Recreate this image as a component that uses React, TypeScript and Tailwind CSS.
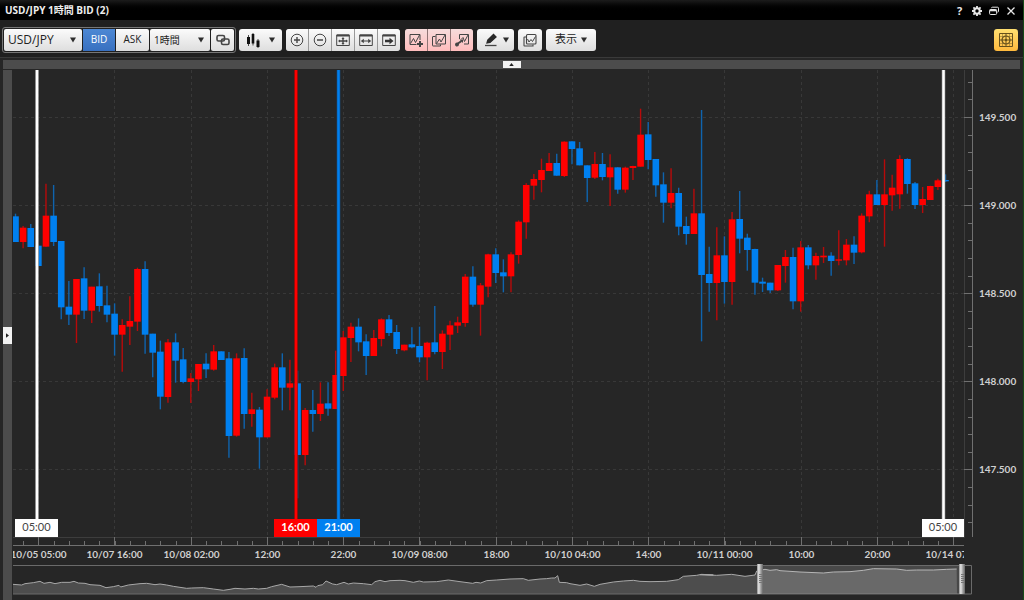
import React from "react";

type Bar = [kind: "R" | "B", high: number, top: number, bottom: number, low: number];

// Bar extents are in thirds of a chart unit below each segment's base.
const SEGMENTS: { base: number; bars: Bar[] }[] = [
  {
    base: 170,
    bars: [
      ["B", 131, 139, 216, 216], ["R", 168, 173, 216, 235], ["B", 162, 174, 231, 231], ["B", 227, 227, 288, 288],
      ["R", 41, 137, 230, 230], ["B", 45, 137, 216, 228], ["B", 213, 213, 412, 448], ["B", 333, 410, 434, 465],
      ["R", 327, 327, 434, 519], ["B", 292, 325, 422, 447], ["R", 350, 350, 422, 459], ["B", 310, 349, 408, 425],
      ["B", 347, 406, 434, 457], ["B", 400, 431, 494, 557], ["R", 448, 465, 494, 605], ["R", 379, 453, 470, 525],
      ["R", 293, 297, 455, 483], ["B", 274, 297, 494, 551], ["B", 491, 491, 548, 622], ["B", 512, 545, 680, 718],
      ["R", 507, 517, 681, 698], ["B", 490, 517, 572, 638], ["B", 534, 568, 636, 640], ["R", 609, 625, 636, 699],
      ["R", 582, 582, 628, 663], ["B", 550, 581, 598, 624],
    ],
  },
  {
    base: 310,
    bars: [
      ["R", 105, 124, 179, 182], ["B", 124, 124, 150, 150], ["B", 126, 145, 378, 443], ["R", 130, 145, 377, 380],
      ["B", 115, 144, 312, 356], ["R", 248, 298, 312, 350], ["B", 291, 299, 382, 476], ["R", 238, 260, 382, 382],
      ["R", 161, 172, 263, 268], ["B", 130, 172, 233, 301], ["R", 149, 220, 233, 301], ["B", 182, 220, 435, 565],
      ["R", 294, 300, 435, 466], ["B", 240, 300, 312, 365], ["R", 217, 281, 312, 333], ["B", 217, 280, 296, 317],
      ["R", 122, 195, 297, 297], ["R", 63, 82, 198, 243], ["R", 38, 50, 84, 156], ["B", 25, 50, 97, 124],
      ["B", 73, 94, 138, 195], ["R", 60, 84, 138, 138], ["R", 25, 28, 87, 109],
    ],
  },
  {
    base: 200,
    bars: [
      ["B", 345, 358, 399, 408], ["B", 375, 396, 447, 462], ["R", 434, 434, 451, 454], ["B", 382, 433, 442, 445],
      ["B", 380, 438, 472, 487], ["R", 425, 428, 472, 541], ["B", 318, 427, 456, 463], ["R", 391, 401, 456, 507],
      ["R", 362, 376, 404, 450], ["R", 350, 367, 377, 399], ["R", 222, 230, 369, 380], ["B", 199, 230, 314, 320],
      ["R", 249, 256, 314, 407], ["R", 161, 163, 260, 292], ["B", 145, 163, 219, 249],
    ],
  },
  {
    base: 100,
    bars: [
      ["B", 478, 517, 529, 577], ["R", 457, 463, 529, 577], ["R", 361, 365, 465, 491], ["R", 250, 255, 367, 416],
      ["R", 222, 237, 257, 299], ["R", 176, 210, 240, 277], ["R", 159, 189, 213, 213], ["B", 161, 189, 227, 227],
      ["R", 124, 125, 228, 231], ["B", 124, 124, 147, 193], ["B", 126, 145, 196, 196], ["B", 196, 196, 234, 306],
      ["R", 156, 192, 233, 237], ["B", 159, 192, 231, 241], ["R", 163, 202, 232, 318], ["B", 202, 202, 269, 281],
      ["R", 200, 203, 269, 278], ["R", 197, 198, 204, 240], ["R", 26, 104, 200, 200], ["B", 66, 103, 180, 208],
      ["B", 177, 177, 256, 290], ["B", 217, 253, 308, 368], ["R", 205, 279, 308, 325], ["B", 263, 279, 380, 406],
      ["B", 350, 378, 402, 434], ["R", 266, 340, 402, 402], ["B", 30, 340, 525, 724], ["B", 440, 522, 549, 635],
      ["R", 382, 466, 549, 661], ["B", 409, 466, 546, 611], ["R", 336, 358, 546, 614], ["B", 273, 357, 416, 460],
      ["B", 401, 413, 450, 512], ["B", 446, 447, 548, 584], ["B", 533, 545, 551, 576], ["B", 548, 548, 571, 579],
      ["R", 495, 495, 571, 573], ["R", 450, 471, 498, 548], ["B", 443, 471, 604, 628], ["R", 423, 442, 604, 635],
      ["B", 435, 442, 496, 508], ["R", 458, 468, 496, 539], ["R", 441, 467, 472, 489], ["B", 457, 467, 483, 527],
      ["R", 391, 478, 482, 496], ["R", 417, 434, 481, 496], ["B", 409, 434, 458, 492], ["R", 340, 347, 457, 460],
      ["R", 272, 283, 349, 367],
    ],
  },
  {
    base: 70,
    bars: [
      ["B", 330, 373, 405, 405], ["R", 268, 373, 405, 530], ["R", 314, 353, 376, 422], ["R", 256, 267, 373, 416],
      ["B", 265, 267, 342, 371], ["B", 336, 340, 405, 417], ["R", 351, 387, 405, 429], ["R", 347, 348, 390, 390],
      ["R", 326, 331, 351, 360], ["B", 313, 330, 334, 336],
    ],
  },
];

const CANDLES = SEGMENTS.flatMap(({ base, bars }) =>
  bars.map(([kind, high, top, bottom, low]) => ({
    kind,
    high: base + high / 3,
    top: base + top / 3,
    bottom: base + bottom / 3,
    low: base + low / 3,
  })),
);

const NAV_SEGMENTS: { x: number; y: number; points: [number, number][] }[] = [
  {
    x: 0,
    y: 500,
    points: [
      [39, 253], [65, 255], [75, 251], [100, 248], [120, 244], [132, 250], [150, 247], [165, 251], [185, 247],
      [210, 247], [222, 244], [235, 249], [255, 250], [270, 254], [300, 256], [318, 263], [340, 260], [357, 256],
      [362, 261], [385, 255], [420, 251], [440, 250], [465, 254], [480, 252], [500, 255], [520, 259], [560, 265],
      [575, 264], [610, 263], [640, 267], [670, 271], [690, 268], [705, 265], [735, 267], [760, 265], [775, 267],
      [800, 265], [815, 260], [845, 253], [870, 261], [900, 260], [940, 258], [948, 262], [953, 257], [968, 254],
      [978, 243], [998, 252], [1010, 254], [1032, 247], [1045, 252], [1060, 249], [1090, 251], [1115, 254],
      [1125, 245], [1140, 241], [1155, 245], [1170, 242],
    ],
  },
  {
    x: 400,
    y: 510,
    points: [
      [0, 211], [15, 212], [40, 217], [58, 213], [70, 216], [110, 215], [145, 210], [180, 215], [218, 220],
      [228, 217], [242, 219], [260, 212], [290, 210], [330, 207], [370, 206], [385, 211], [420, 207], [440, 206],
      [455, 204], [465, 204], [473, 197], [478, 217], [500, 218], [510, 221], [540, 226], [560, 222], [583, 229],
      [600, 223], [640, 216], [670, 213], [700, 211], [720, 214], [750, 215], [800, 214], [835, 209], [850, 199],
      [890, 196], [905, 193], [940, 195],
    ],
  },
  {
    x: 700,
    y: 440,
    points: [
      [0, 404], [50, 406], [95, 403], [135, 409], [165, 405], [170, 393], [195, 388], [210, 391], [230, 389],
      [240, 392], [300, 396], [370, 399], [400, 396], [450, 395], [490, 391], [520, 386], [590, 387], [620, 391],
      [650, 390], [700, 390], [740, 388], [770, 387],
    ],
  },
];

const NAV_LINE = NAV_SEGMENTS.flatMap((s) => s.points.map(([x, y]) => `${s.x + x / 3},${s.y + y / 3}`)).join(" ");

const TIMES = [
  "10/05 05:00", "10/07 16:00", "10/08 02:00", "12:00", "22:00", "10/09 08:00", "18:00",
  "10/10 04:00", "14:00", "10/11 00:00", "10:00", "20:00", "10/14 07:00",
];
const PRICES = ["149.500", "149.000", "148.500", "148.000", "147.500"];

const timeX = (i: number) => Math.round(38.2 + i * 76.24) + 0.5;
const priceY = (i: number) => Math.round(117 + i * 88.1) + 0.5;
const minorTimes = Array.from({ length: 62 }, (_, i) => Math.round(23.1 + i * 15.25) + 0.5);
const minorPrices = Array.from({ length: 27 }, (_, i) => Math.round(81.8 + i * 17.62) + 0.5).filter((y) => y < 537);

const MARKERS = [
  { x: 37, left: 15, width: 43, label: "05:00", fill: "#ffffff", text: "#444444", edge: "#8a8a8a", weight: 400 },
  { x: 296, left: 274, width: 43, label: "16:00", fill: "#ff0000", text: "#ffffff", edge: "#8c0c0c", weight: 700 },
  { x: 338.5, left: 317, width: 43, label: "21:00", fill: "#0080f0", text: "#ffffff", edge: "#15508a", weight: 700 },
  { x: 943.5, left: 922, width: 42, label: "05:00", fill: "#ffffff", text: "#444444", edge: "#8a8a8a", weight: 400 },
];

function Chart() {
  return (
    <svg
      viewBox="13 70 1010 530"
      className="block h-auto w-full"
      fontFamily="Lato, sans-serif"
      fontSize="10"
      role="img"
      aria-label="USD/JPY"
    >
      <defs>
        <clipPath id="timeline">
          <rect x="13" y="70" width="951" height="530" />
        </clipPath>
        <linearGradient id="grip" x1="0" x2="1" y1="0" y2="0">
          <stop offset="0" stopColor="#8e8e8e" />
          <stop offset="0.3" stopColor="#e6e6e6" />
          <stop offset="0.6" stopColor="#a8a8a8" />
          <stop offset="1" stopColor="#666666" />
        </linearGradient>
      </defs>

      <g stroke="#383838" strokeDasharray="3 3">
        {PRICES.map((p, i) => (
          <line key={p} x1="13" x2="964" y1={priceY(i)} y2={priceY(i)} />
        ))}
        {TIMES.map((t, i) => (
          <line key={t} x1={timeX(i)} x2={timeX(i)} y1="70" y2="537" />
        ))}
      </g>
      <path d="M13 537.5H964.5V70" fill="none" stroke="#3d3d3d" />

      <g>
        {CANDLES.map((c, i) => {
          const x = 15.5 + i * 7.623;
          const red = c.kind === "R";
          return (
            <g key={i}>
              <line x1={x} x2={x} y1={c.high} y2={c.low} stroke={red ? "#b80a0a" : "#0f64ae"} strokeWidth="1.4" />
              <rect
                x={x - 3.3}
                y={c.top}
                width="6.6"
                height={Math.max(c.bottom - c.top, 1)}
                fill={red ? "#ff0000" : "#0080f0"}
              />
            </g>
          );
        })}
      </g>

      {MARKERS.map((m) => (
        <g key={m.x}>
          <line x1={m.x} x2={m.x} y1="70" y2="520" stroke={m.edge} strokeWidth="3.6" />
          <line x1={m.x} x2={m.x} y1="70" y2="520" stroke={m.fill} strokeWidth="2.4" />
          <rect x={m.left} y="519" width={m.width} height="18" fill={m.fill} />
          <text x={m.left + m.width / 2} y="531" textAnchor="middle" fill={m.text} fontWeight={m.weight} fontSize="11">
            {m.label}
          </text>
        </g>
      ))}

      <g stroke="#707070">
        <path d="M13 545.5H964M972.5 70V537" fill="none" />
        {TIMES.map((t, i) => (
          <line key={t} x1={timeX(i)} x2={timeX(i)} y1="537" y2="545" />
        ))}
        {minorTimes.map((x) => (
          <line key={x} x1={x} x2={x} y1="541" y2="545" />
        ))}
        {PRICES.map((p, i) => (
          <line key={p} x1="964" x2="972" y1={priceY(i)} y2={priceY(i)} />
        ))}
        {minorPrices.map((y) => (
          <line key={y} x1="968" x2="972" y1={y} y2={y} />
        ))}
      </g>

      <g fill="#d0d0d0" fontWeight="700" clipPath="url(#timeline)">
        {TIMES.map((t, i) => (
          <text key={t} x={timeX(i)} y="558" textAnchor="middle">
            {t}
          </text>
        ))}
      </g>
      <g fill="#d0d0d0" fontWeight="700">
        {PRICES.map((p, i) => (
          <text key={p} x="979" y={priceY(i) + 3}>
            {p}
          </text>
        ))}
      </g>

      <polygon points={`13,594 ${NAV_LINE} 957,594`} fill="#4d4d4d" />
      <polyline points={NAV_LINE} fill="none" stroke="#a8a8a8" />
      <path d="M13 565.5H971.5V594H13" fill="none" stroke="#6a6a6a" />
      <rect x="761" y="566" width="200" height="28" fill="#ffffff" fillOpacity="0.16" />
      {[757, 959].map((x) => (
        <g key={x}>
          <rect x={x} y="564" width="6" height="30" fill="url(#grip)" />
          <path d={`M${x + 2} 574.5h3m-3 2h3m-3 2h3m-3 2h3m-3 2h3`} stroke="#777777" />
        </g>
      ))}
    </svg>
  );
}

function Glyph({ children }: { children: React.ReactNode }) {
  return (
    <svg viewBox="0 0 16 14" className="h-3.5 w-4" fill="none" stroke="#454545" strokeWidth="1.3" aria-hidden="true">
      {children}
    </svg>
  );
}

function Caret() {
  return (
    <svg viewBox="0 0 6 6" className="h-1.5 w-1.5" aria-hidden="true">
      <path d="M0 0.5h6L3 5.5z" fill="#2c2c2c" />
    </svg>
  );
}

const FACE = "flex h-[22px] items-center justify-center bg-linear-to-b from-[#fbfbfb] to-[#dedede]";
const PINK = "flex h-[22px] w-[22px] items-center justify-center bg-linear-to-b from-[#f6dcdc] to-[#ffbcbc]";

function Picker({ label, value, className }: { label: string; value: string; className: string }) {
  return (
    <div className={`relative ${className}`}>
      <select
        aria-label={label}
        className="h-[22px] w-full appearance-none rounded-[2px] bg-linear-to-b from-[#fbfbfb] to-[#dedede] pr-4 pl-1 leading-[22px] text-[#222]"
      >
        <option>{value}</option>
      </select>
      <span className="pointer-events-none absolute inset-y-0 right-1.5 flex items-center">
        <Caret />
      </span>
    </div>
  );
}

function TitleBar() {
  const cls = "flex h-4 w-[17px] items-center justify-center text-[#e8e8e8]";
  return (
    <header className="flex h-5 items-center justify-between bg-linear-to-b from-[#1c1c1c] to-black to-60% pr-1 pl-[5px]">
      <h1 className="text-[10px] leading-4 font-bold text-[#eeeeee]">USD/JPY 1時間 BID (2)</h1>
      <div className="flex pt-0.5">
        <button className={`${cls} text-[11px] font-bold`}>?</button>
        <button className={cls} aria-label="設定">
          <svg viewBox="0 0 10 10" className="h-2.5 w-2.5" fill="none" stroke="currentColor">
            <circle cx="5" cy="5" r="2.7" strokeWidth="2" />
            <path d="M5 0v2M5 8v2M0 5h2M8 5h2M1.4 1.4l1.3 1.3M7.3 7.3l1.3 1.3M8.6 1.4L7.3 2.7M2.7 7.3L1.4 8.6" strokeWidth="1.8" />
          </svg>
        </button>
        <button className={cls} aria-label="ウィンドウ">
          <svg viewBox="0 0 10 10" className="h-2.5 w-2.5" fill="none" stroke="currentColor">
            <path d="M2.5 2.2q0-1 1-1h5q1 0 1 1v3q0 1-1 1" />
            <rect x="0.6" y="3.5" width="7" height="5" rx="1" />
            <path d="M0.8 4.4h6.6" strokeWidth="1.8" />
          </svg>
        </button>
        <button className={cls} aria-label="閉じる">
          <svg viewBox="0 0 10 10" className="h-2.5 w-2.5" stroke="currentColor" strokeWidth="1.3">
            <path d="M1.5 1.5l7 7M8.5 1.5l-7 7" />
          </svg>
        </button>
      </div>
    </header>
  );
}

function Toolbar() {
  return (
    <div className="flex h-[38px] items-center border-b border-[#3a3a3a] bg-[#202020] pt-0.5 pr-[5px] pl-0.5 text-[11px] text-[#222]">
      <div className="flex gap-px rounded-[3px] border border-[#777] p-px">
        <Picker label="通貨ペア" value="USD/JPY" className="w-[78px] text-[12px]" />
        <div className="flex gap-px">
          <button className="h-[22px] w-8 bg-linear-to-b from-[#4d88d4] to-[#3870c0] text-[10px] text-white">BID</button>
          <button className={`${FACE} w-[33px] rounded-r-[2px] text-[10px]`}>ASK</button>
        </div>
        <Picker label="足種" value="1時間" className="w-[60px] text-[10px]" />
        <button className={`${FACE} w-[23px] rounded-[2px]`} aria-label="連動">
          <Glyph>
            <rect x="2" y="2.5" width="7.5" height="5.5" rx="1.5" strokeWidth="1.6" />
            <rect x="6.5" y="6" width="7.5" height="5.5" rx="1.5" strokeWidth="1.6" />
          </Glyph>
        </button>
      </div>

      <button className={`${FACE} ml-[3px] w-[43px] gap-2 rounded-[3px] pr-0.5`} aria-label="チャート種類">
        <svg viewBox="0 0 16 16" className="h-4 w-4" aria-hidden="true">
          <path d="M3.5 3v11M8 1v12.500M13 7v9" stroke="#222" strokeWidth="0.800" />
          <path d="M2 5h3v7H2zM6.700 2h2.600v9.500H6.700zM11.500 8.500h3v6.500h-3z" fill="#111" />
        </svg>
        <Caret />
      </button>

      <div className="ml-1 flex gap-px overflow-hidden rounded-[3px] bg-[#999]">
        <button className={`${FACE} w-[22px]`} aria-label="拡大">
          <Glyph>
            <circle cx="8" cy="7" r="5.8" strokeWidth="1" />
            <path d="M5 7h6M8 4v6" strokeWidth="1.4" />
          </Glyph>
        </button>
        <button className={`${FACE} w-[22px]`} aria-label="縮小">
          <Glyph>
            <circle cx="8" cy="7" r="5.8" strokeWidth="1" />
            <path d="M5 7h6" strokeWidth="1.4" />
          </Glyph>
        </button>
        <button className={`${FACE} w-[22px]`} aria-label="全体表示">
          <Glyph>
            <path d="M1.700 2h12.600v10.500H1.700z" strokeWidth="1" />
            <path d="M1.700 2.500h12.600" strokeWidth="2.200" />
            <path d="M4 8h8M8 5v6" strokeWidth="1.400" />
            <path d="M3 8l2-1.500v3zM13 8l-2-1.500v3zM8 4l1.500 2h-3zM8 12l1.500-2h-3z" fill="#454545" stroke="none" />
          </Glyph>
        </button>
        <button className={`${FACE} w-[22px]`} aria-label="横幅に合わせる">
          <Glyph>
            <path d="M1.700 2h12.600v10.500H1.700z" strokeWidth="1" />
            <path d="M1.700 2.500h12.600" strokeWidth="2.200" />
            <path d="M4 8h8" strokeWidth="1.200" />
            <path d="M2.800 8l3-2.300v4.600zM13.200 8l-3-2.300v4.600z" fill="#454545" stroke="none" />
          </Glyph>
        </button>
        <button className={`${FACE} w-[22px]`} aria-label="最新へ移動">
          <Glyph>
            <path d="M1.700 2h12.600v10.500H1.700z" strokeWidth="1" />
            <path d="M1.700 2.500h12.600" strokeWidth="2.200" />
            <path d="M4 6.700h4.500V4.700l4 3.300-4 3.300V9.300H4z" fill="#333" stroke="none" />
          </Glyph>
        </button>
      </div>

      <div className="ml-[5px] flex gap-px overflow-hidden rounded-[3px] bg-[#8f7474]">
        <button className={PINK} aria-label="テクニカル追加">
          <Glyph>
            <path d="M8.500 11.500H2v-10h10V7" strokeWidth="1" />
            <path d="M2.500 10.500l3-5 2 4L11.500 2" strokeWidth="1" />
            <path d="M9 11h6M12 8v6" strokeWidth="2" />
          </Glyph>
        </button>
        <button className={PINK} aria-label="テクニカル複製">
          <Glyph>
            <path d="M4.500 3.500H2q-.5 0-.5.500v8.500q0 .5.5.5h7.500v-1.500" strokeWidth="1" />
            <path d="M5 1.500h9.500v9.500H5z" strokeWidth="1" />
            <path d="M5.500 10.500L8.500 6l1.500 3L14 2" strokeWidth="1" />
          </Glyph>
        </button>
        <button className={PINK} aria-label="テクニカル編集">
          <Glyph>
            <path d="M5.500 6V1.500h9v9.500H10" strokeWidth="1" />
            <path d="M7.500 6l1.500-1.500 1.500 4L14 2" strokeWidth="1" />
            <path d="M2.500 11.500l5-3.500" strokeWidth="2" />
            <circle cx="3" cy="11.500" r="1.300" fill="#454545" />
            <path d="M5.500 6.500h3.500v3.500z" fill="#454545" stroke="none" />
          </Glyph>
        </button>
      </div>

      <button className={`${FACE} ml-1 w-[37px] gap-1 rounded-[3px]`} aria-label="描画">
        <Glyph>
          <path d="M4 10l.8-3L10.500 1.500l2.500 2.500L7 9.500z" fill="#2a2a2a" stroke="#2a2a2a" />
          <path d="M2 12.500h11.500" />
        </Glyph>
        <Caret />
      </button>
      <button className={`${FACE} ml-1 w-6 rounded-[3px]`} aria-label="重ねて表示">
        <Glyph>
          <path d="M4 4H2.500q-.5 0-.5.500V12.500q0 .5.5.5H11v-1.500" strokeWidth="1.100" />
          <rect x="4.500" y="1.500" width="9.500" height="9.500" rx="1" strokeWidth="1.100" />
          <path d="M5.500 6l1.500 3 2-2.500 1.500 2L13.500 3.500" strokeWidth="1" />
        </Glyph>
      </button>
      <button className={`${FACE} ml-1 w-[50px] gap-1 rounded-[3px]`}>
        表示
        <Caret />
      </button>

      <button
        className="ml-auto flex h-[22px] w-6 items-center justify-center rounded-[3px] bg-linear-to-b from-[#ffdf70] to-[#ffb93c]"
        aria-label="クロスライン"
      >
        <svg viewBox="0 0 14 14" className="h-3.5 w-3.5" fill="none" stroke="#66501c" aria-hidden="true">
          <path d="M0.500 0.500h13v13H0.500zM0.500 7h13M7 0.500v13" />
          <path d="M3.500 0.500v13M10.500 0.500v13M0.500 3.500h13M0.500 10.500h13" strokeWidth="0.400" />
          <circle cx="7" cy="7" r="4" strokeWidth="1.200" />
          <circle cx="7" cy="7" r="1.200" fill="#66501c" stroke="none" />
        </svg>
      </button>
    </div>
  );
}

export default function App() {
  return (
    <div className="flex min-h-screen w-full flex-col overflow-hidden border-r border-[#164a16] bg-[#262626] font-['Open_Sans','Noto_Sans_CJK_JP',sans-serif]">
      <TitleBar />
      <Toolbar />
      <div className="mt-0.5 mr-[3px] ml-[3px] flex h-[9px] items-center justify-center bg-[#4c4c4c]">
        <button className="flex h-[7px] w-[18px] items-center justify-center bg-[#f2f2f2]" aria-label="上部パネル">
          <svg viewBox="0 0 6 4" className="h-[3px] w-[5px]" aria-hidden="true">
            <path d="M0 4L3 0l3 4z" fill="#222" />
          </svg>
        </button>
      </div>
      <main className="flex flex-1 pt-px pl-[3px]">
        <aside className="flex w-[9px] items-center bg-[#4c4c4c]">
          <button className="flex h-[17px] w-full items-center justify-center bg-[#f2f2f2]" aria-label="左パネル">
            <svg viewBox="0 0 4 6" className="h-[5px] w-[3px]" aria-hidden="true">
              <path d="M0 0l4 3-4 3z" fill="#222" />
            </svg>
          </button>
        </aside>
        <div className="min-w-0 flex-1 pl-px">
          <Chart />
        </div>
      </main>
    </div>
  );
}
